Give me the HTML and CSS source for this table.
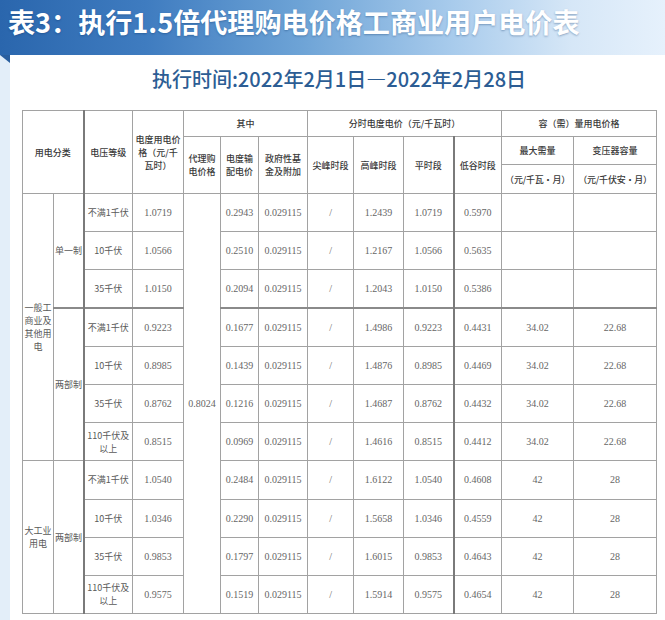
FILE: index.html
```html
<!DOCTYPE html>
<html lang="zh-CN">
<head>
<meta charset="utf-8">
<title>表3：执行1.5倍代理购电价格工商业用户电价表</title>
<link rel="stylesheet" href="styles.css">
</head>
<body>
<header class="hdr">
  <h1>表3：执行1.5倍代理购电价格工商业用户电价表</h1>
</header>
<div class="wrap">
  <div class="card">
    <p class="sub">执行时间:2022年2月1日—2022年2月28日</p>
    <table class="tbl">
      <colgroup>
        <col class="wa"><col class="wb"><col class="wc"><col class="wd"><col class="we"><col class="wf"><col class="wg"><col class="wh"><col class="wi"><col class="wj"><col class="wk"><col class="wl"><col class="wm">
      </colgroup>
      <thead>
        <tr class="h1">
          <th colspan="2" rowspan="3">用电分类</th>
          <th rowspan="3" class="tl">电压等级</th>
          <th rowspan="3">电度用电价<br>格（元/千<br>瓦时）</th>
          <th colspan="3">其中</th>
          <th colspan="4">分时电度电价（元/千瓦时）</th>
          <th colspan="2">容（需）量用电价格</th>
        </tr>
        <tr class="h2">
          <th rowspan="2">代理购<br>电价格</th>
          <th rowspan="2">电度输<br>配电价</th>
          <th rowspan="2">政府性基<br>金及附加</th>
          <th rowspan="2">尖峰时段</th>
          <th rowspan="2">高峰时段</th>
          <th rowspan="2">平时段</th>
          <th rowspan="2" class="tl">低谷时段</th>
          <th>最大需量</th>
          <th>变压器容量</th>
        </tr>
        <tr class="h3">
          <th class="unit">（元/千瓦·月）</th>
          <th class="unit">（元/千伏安·月）</th>
        </tr>
      </thead>
      <tbody>
        <tr>
          <td rowspan="7" class="cat">一般工<br>商业及<br>其他用<br>电</td>
          <td rowspan="3">单一制</td>
          <td class="tl">不满1千伏</td><td class="n">1.0719</td>
          <td rowspan="11" class="n">0.8024</td>
          <td class="n">0.2943</td><td class="n">0.029115</td><td class="n">/</td><td class="n">1.2439</td><td class="n">1.0719</td><td class="n tl">0.5970</td><td></td><td></td>
        </tr>
        <tr>
          <td class="tl">10千伏</td><td class="n">1.0566</td>
          <td class="n">0.2510</td><td class="n">0.029115</td><td class="n">/</td><td class="n">1.2167</td><td class="n">1.0566</td><td class="n tl">0.5635</td><td></td><td></td>
        </tr>
        <tr>
          <td class="tl">35千伏</td><td class="n">1.0150</td>
          <td class="n">0.2094</td><td class="n">0.029115</td><td class="n">/</td><td class="n">1.2043</td><td class="n">1.0150</td><td class="n tl">0.5386</td><td></td><td></td>
        </tr>
        <tr class="tt">
          <td rowspan="4">两部制</td>
          <td class="tl">不满1千伏</td><td class="n">0.9223</td>
          <td class="n">0.1677</td><td class="n">0.029115</td><td class="n">/</td><td class="n">1.4986</td><td class="n">0.9223</td><td class="n tl">0.4431</td><td class="n">34.02</td><td class="n">22.68</td>
        </tr>
        <tr>
          <td class="tl">10千伏</td><td class="n">0.8985</td>
          <td class="n">0.1439</td><td class="n">0.029115</td><td class="n">/</td><td class="n">1.4876</td><td class="n">0.8985</td><td class="n tl">0.4469</td><td class="n">34.02</td><td class="n">22.68</td>
        </tr>
        <tr>
          <td class="tl">35千伏</td><td class="n">0.8762</td>
          <td class="n">0.1216</td><td class="n">0.029115</td><td class="n">/</td><td class="n">1.4687</td><td class="n">0.8762</td><td class="n tl">0.4432</td><td class="n">34.02</td><td class="n">22.68</td>
        </tr>
        <tr>
          <td class="tl">110千伏及<br>以上</td><td class="n">0.8515</td>
          <td class="n">0.0969</td><td class="n">0.029115</td><td class="n">/</td><td class="n">1.4616</td><td class="n">0.8515</td><td class="n tl">0.4412</td><td class="n">34.02</td><td class="n">22.68</td>
        </tr>
        <tr>
          <td rowspan="4" class="cat">大工业<br>用电</td>
          <td rowspan="4">两部制</td>
          <td class="tl">不满1千伏</td><td class="n">1.0540</td>
          <td class="n">0.2484</td><td class="n">0.029115</td><td class="n">/</td><td class="n">1.6122</td><td class="n">1.0540</td><td class="n tl">0.4608</td><td class="n">42</td><td class="n">28</td>
        </tr>
        <tr>
          <td class="tl">10千伏</td><td class="n">1.0346</td>
          <td class="n">0.2290</td><td class="n">0.029115</td><td class="n">/</td><td class="n">1.5658</td><td class="n">1.0346</td><td class="n tl">0.4559</td><td class="n">42</td><td class="n">28</td>
        </tr>
        <tr>
          <td class="tl">35千伏</td><td class="n">0.9853</td>
          <td class="n">0.1797</td><td class="n">0.029115</td><td class="n">/</td><td class="n">1.6015</td><td class="n">0.9853</td><td class="n tl">0.4643</td><td class="n">42</td><td class="n">28</td>
        </tr>
        <tr>
          <td class="tl">110千伏及<br>以上</td><td class="n">0.9575</td>
          <td class="n">0.1519</td><td class="n">0.029115</td><td class="n">/</td><td class="n">1.5914</td><td class="n">0.9575</td><td class="n tl">0.4654</td><td class="n">42</td><td class="n">28</td>
        </tr>
      </tbody>
    </table>
  </div>
</div>
</body>
</html>
```

FILE: styles.css
```css
html, body {
  margin: 0;
  padding: 0;
}
body {
  width: 665px;
  height: 620px;
  overflow: hidden;
  background: #e3eef9;
  font-family: "Noto Sans CJK SC", "Noto Sans", sans-serif;
}
.hdr {
  height: 55px;
  box-sizing: border-box;
  padding: 5px 0 0 8px;
  background: linear-gradient(90deg, #2a66ad 0%, #3f7cc0 22%, #6da3d6 45%, #a8cbec 68%, #d6e7f7 86%, #e6f1fc 100%);
}
.hdr h1 {
  margin: 0;
  font-size: 27.1px;
  line-height: 34px;
  font-weight: 700;
  color: #ffffff;
  text-shadow: 0 1px 2px rgba(10, 50, 100, 0.35);
}
.wrap {
  position: relative;
  padding-left: 10px;
}
.wrap::before {
  content: "";
  position: absolute;
  left: 0;
  top: 0;
  width: 0;
  height: 0;
  border-top: 8px solid #2a5f9f;
  border-left: 10px solid transparent;
}
.card {
  background: #ffffff;
  padding: 10px 9px 7px 12px;
}
.sub {
  margin: 0 0 17px;
  text-align: center;
  font-size: 20px;
  line-height: 28px;
  font-weight: 500;
  color: #2c5d94;
}
.tbl {
  border-collapse: collapse;
  table-layout: fixed;
  width: 634px;
  font-size: 9px;
  color: #555;
}
.wa { width: 31px; }
.wb { width: 30px; }
.wc { width: 49px; }
.wd { width: 51px; }
.we { width: 37px; }
.wf { width: 38px; }
.wg { width: 49px; }
.wh { width: 46px; }
.wi { width: 50px; }
.wj { width: 50px; }
.wk { width: 48px; }
.wl { width: 72px; }
.wm { width: 83px; }
.tbl th, .tbl td {
  border: 1px solid #a2a2a2;
  padding: 0 1px;
  text-align: center;
  vertical-align: middle;
  overflow: hidden;
  white-space: nowrap;
}
.tbl th {
  font-weight: 500;
  color: #3a3a3a;
  line-height: 13px;
}
.tbl td {
  line-height: 13px;
  color: #5a5a5a;
}
.tbl .unit {
  padding: 0;
  letter-spacing: -0.2px;
}
.tbl .n {
  font-family: "Liberation Serif", "Noto Sans CJK SC", serif;
  font-size: 10px;
  color: #666;
}
.tbl .tl {
  border-left: 2px solid #7a7a7a;
}
.tbl tr.tt td {
  border-top: 2px solid #8a8a8a;
}
.h1 { height: 26px; }
.h2 { height: 28px; }
.h3 { height: 29px; }
.tbl tbody tr { height: 38.2px; }
```
